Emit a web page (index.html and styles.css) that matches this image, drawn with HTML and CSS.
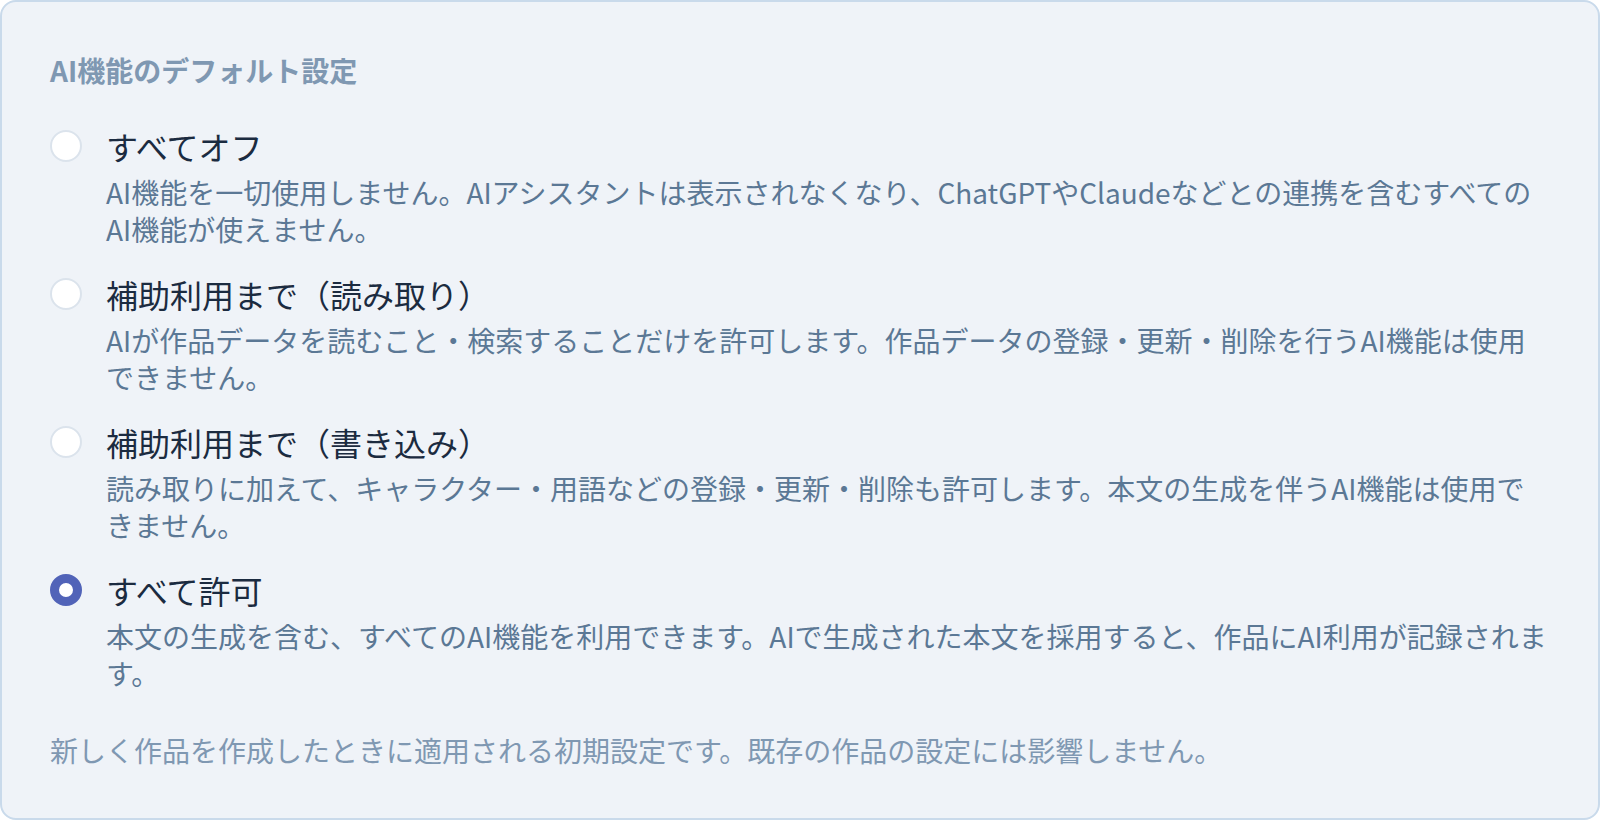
FILE: index.html
```html
<!DOCTYPE html>
<html lang="ja">
<head>
<meta charset="utf-8">
<title>AI機能のデフォルト設定</title>
<link rel="stylesheet" href="styles.css">
</head>
<body>
<section class="card">
  <h2 class="card-title">AI機能のデフォルト設定</h2>
  <div class="options">
    <label class="option">
      <input class="radio" type="radio" name="ai-mode" value="off">
      <span class="option-body">
        <span class="option-label">すべてオフ</span>
        <span class="option-desc">AI機能を一切使用しません。AIアシスタントは表示されなくなり、ChatGPTやClaudeなどとの連携を含むすべてのAI機能が使えません。</span>
      </span>
    </label>
    <label class="option">
      <input class="radio" type="radio" name="ai-mode" value="read">
      <span class="option-body">
        <span class="option-label">補助利用まで（読み取り）</span>
        <span class="option-desc">AIが作品データを読むこと・検索することだけを許可します。作品データの登録・更新・削除を行うAI機能は使用できません。</span>
      </span>
    </label>
    <label class="option">
      <input class="radio" type="radio" name="ai-mode" value="write">
      <span class="option-body">
        <span class="option-label">補助利用まで（書き込み）</span>
        <span class="option-desc">読み取りに加えて、キャラクター・用語などの登録・更新・削除も許可します。本文の生成を伴うAI機能は使用できません。</span>
      </span>
    </label>
    <label class="option">
      <input class="radio" type="radio" name="ai-mode" value="all" checked>
      <span class="option-body">
        <span class="option-label">すべて許可</span>
        <span class="option-desc">本文の生成を含む、すべてのAI機能を利用できます。AIで生成された本文を採用すると、作品にAI利用が記録されます。</span>
      </span>
    </label>
  </div>
  <p class="card-note">新しく作品を作成したときに適用される初期設定です。既存の作品の設定には影響しません。</p>
</section>
</body>
</html>
```

FILE: styles.css
```css
html, body {
  margin: 0;
  padding: 0;
  background: #ffffff;
}

body {
  font-family: "Noto Sans CJK JP", "Noto Sans", "Liberation Sans", sans-serif;
}

.card {
  box-sizing: border-box;
  width: 1600px;
  min-height: 820px;
  background: #eff3f8;
  border: 2px solid #c9daeb;
  border-radius: 16px;
  padding: 48px;
  display: flex;
  flex-direction: column;
}

.card-title {
  margin: 0 0 32px;
  font-size: 28px;
  line-height: 40px;
  font-weight: 700;
  color: #7f98b2;
}

.options {
  display: flex;
  flex-direction: column;
  gap: 22px;
}

.option {
  display: flex;
  align-items: flex-start;
  gap: 24px;
  cursor: pointer;
}

.radio {
  appearance: none;
  -webkit-appearance: none;
  box-sizing: border-box;
  flex: 0 0 32px;
  width: 32px;
  height: 32px;
  margin: 8px 0 0;
  border-radius: 50%;
  background: #ffffff;
  border: 2px solid #dbe3ec;
}

.radio:checked {
  border: 9px solid #5163b8;
  background: #ffffff;
}

.option-body {
  display: flex;
  flex-direction: column;
  gap: 4px;
  min-width: 0;
  flex: 1;
}

.option-label {
  font-size: 32px;
  line-height: 48px;
  color: #1b2b40;
}

.option-desc {
  font-size: 28px;
  line-height: 37px;
  color: #5b7895;
}

.card-note {
  margin: 40px 0 0;
  font-size: 28px;
  line-height: 37px;
  color: #7f98b2;
}
```
